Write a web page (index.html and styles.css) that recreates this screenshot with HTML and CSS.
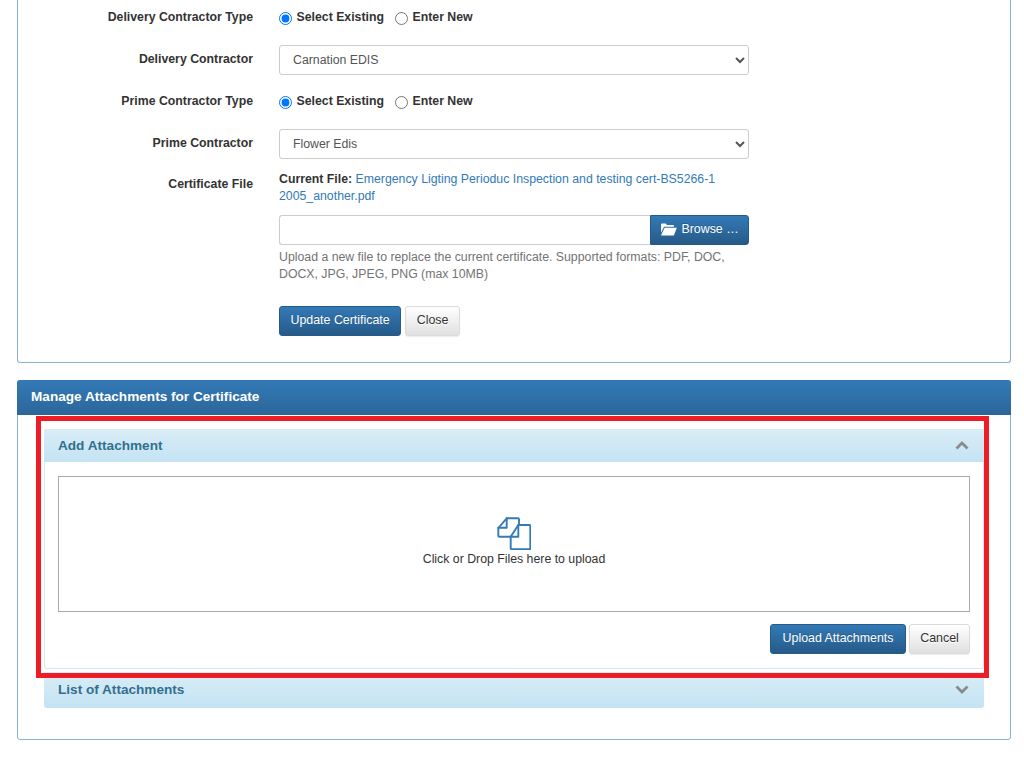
FILE: index.html
```html
<!DOCTYPE html>
<html lang="en">
<head>
<meta charset="utf-8">
<title>Manage Certificate</title>
<link rel="stylesheet" href="styles.css">
</head>
<body>
<section class="panel panel-form">
  <form class="form">
    <div class="row row-radio">
      <label class="label">Delivery Contractor Type</label>
      <div class="radios">
        <label class="radio"><input type="radio" name="d" checked> Select Existing</label>
        <label class="radio"><input type="radio" name="d"> Enter New</label>
      </div>
    </div>
    <div class="row row-select">
      <label class="label">Delivery Contractor</label>
      <select class="control"><option>Carnation EDIS</option></select>
    </div>
    <div class="row row-radio">
      <label class="label">Prime Contractor Type</label>
      <div class="radios">
        <label class="radio"><input type="radio" name="p" checked> Select Existing</label>
        <label class="radio"><input type="radio" name="p"> Enter New</label>
      </div>
    </div>
    <div class="row row-select">
      <label class="label">Prime Contractor</label>
      <select class="control"><option>Flower Edis</option></select>
    </div>
    <div class="row row-file">
      <label class="label label-file">Certificate File</label>
      <div class="file-col">
        <p class="current"><strong>Current File:</strong> <a href="#">Emergency Ligting Perioduc Inspection and testing cert-BS5266-1 2005_another.pdf</a></p>
        <div class="file-group">
          <input class="file-input" type="text">
          <button type="button" class="btn btn-primary btn-browse">
            <svg class="folder" viewBox="0 0 18 14" aria-hidden="true"><path d="M1 3V1.600C1 1 1.400.6 2 .6h4l1.200 1.600H14c.5 0 .8.3.8.8v1H4.200L1 10.500z M4.800 5H18l-3.200 8.400H.9z" fill="#fff"/></svg>
            Browse …
          </button>
        </div>
        <p class="help">Upload a new file to replace the current certificate. Supported formats: PDF, DOC, DOCX, JPG, JPEG, PNG (max 10MB)</p>
        <div class="actions">
          <button type="button" class="btn btn-primary">Update Certificate</button>
          <button type="button" class="btn btn-default">Close</button>
        </div>
      </div>
    </div>
  </form>
</section>

<section class="panel panel-attach">
  <h2 class="panel-heading">Manage Attachments for Certificate</h2>
  <div class="panel-body">
    <div class="highlight"></div>
    <div class="acc acc-open">
      <div class="acc-head">
        <span>Add Attachment</span>
        <svg class="chev" viewBox="0 0 14 9" aria-hidden="true"><path d="M1.500 7.500 7 2l5.500 5.500" fill="none" stroke="#8a8a8a" stroke-width="2.800"/></svg>
      </div>
      <div class="acc-body">
        <div class="dropzone">
          <svg class="files" viewBox="0 0 34 33" aria-hidden="true"><g fill="none" stroke="#337ab7" stroke-width="1.900" stroke-linejoin="round" stroke-linecap="round"><path d="M22 8V2.300a1 1 0 0 0-1-1H9.700L1.300 11v7.700a1 1 0 0 0 1 1h11.400"/><path d="M9.700 1.300v9.400H1.300"/><path d="M21.300 8h11a1 1 0 0 1 1 1v22.300a1 1 0 0 1-1 1H14.700a1 1 0 0 1-1-1V19.700z"/><path d="M21.300 8v11.700h-7.600"/></g></svg>
          <div class="drop-text">Click or Drop Files here to upload</div>
        </div>
        <div class="drop-actions">
          <button type="button" class="btn btn-primary btn-upload">Upload Attachments</button>
          <button type="button" class="btn btn-default btn-cancel">Cancel</button>
        </div>
      </div>
    </div>
    <div class="acc acc-closed">
      <div class="acc-head">
        <span>List of Attachments</span>
        <svg class="chev" viewBox="0 0 14 9" aria-hidden="true"><path d="M1.500 1.500 7 7l5.500-5.500" fill="none" stroke="#8a8a8a" stroke-width="2.800"/></svg>
      </div>
    </div>
  </div>
</section>
</body>
</html>
```
FILE: styles.css
```css
* { box-sizing: border-box; }
html, body { margin: 0; padding: 0; background: #fff; }
body {
  padding: 0 13px 0 17px;
  height: 759px;
  overflow: hidden;
  font-family: "Liberation Sans", Arial, sans-serif;
  font-size: 12.3px;
  line-height: 17px;
  color: #333;
}
.panel {
  border: 1px solid #8ab0d6;
  border-radius: 3px;
  background: #fff;
}
.panel-form {
  border-top: 0;
  border-radius: 0 0 3px 3px;
  height: 363px;
  margin-bottom: 17px;
}
.form { display: flex; flex-direction: column; padding-top: 9px; }
.row { display: flex; align-items: center; }
.row-radio { height: 17px; }
.row-select { height: 30px; margin-top: 19px; }
.row-select + .row-radio { margin-top: 18px; }
.row-select .label { padding-bottom: 2px; }
.row-file { align-items: flex-start; margin-top: 12px; }
.label {
  width: 235px;
  margin-right: 26px;
  text-align: right;
  font-weight: bold;
  flex: none;
}
.label-file { padding-top: 5px; }
.radios { display: flex; gap: 11px; }
.radio { display: flex; align-items: center; font-weight: bold; gap: 4.5px; }
.radio input { margin: 2px 0 0; width: 13px; height: 13px; accent-color: #0075ff; }
.control {
  width: 470px;
  height: 30px;
  border: 1px solid #ccc;
  border-radius: 3px;
  background: #fff;
  padding: 0 9px;
  font: inherit;
  color: #555;
}
.file-col { width: 470px; }
.current { margin: 0; }
.current a { color: #337ab7; text-decoration: none; }
.file-group { display: flex; height: 30px; margin-top: 10px; }
.file-input {
  flex: 1;
  min-width: 0;
  border: 1px solid #ccc;
  border-right: 0;
  border-radius: 3px 0 0 3px;
}
.btn {
  height: 30px;
  border-radius: 3px;
  font: inherit;
  font-size: 12.4px;
  padding: 0 10.5px 2px;
  cursor: pointer;
}
.btn-primary {
  border: 1px solid #265a88;
  color: #fff;
  background: linear-gradient(#337ab7, #265a88);
  text-shadow: 0 -1px 0 rgba(0,0,0,.2);
}
.btn-default {
  border: 1px solid #dbdbdb;
  color: #333;
  background: linear-gradient(#fff, #e0e0e0);
  text-shadow: 0 1px 0 #fff;
  box-shadow: 0 1px 1px rgba(0,0,0,.08);
}
.btn-browse {
  width: 99px;
  padding: 0 0 2px;
  border-radius: 0 3px 3px 0;
  display: flex;
  align-items: center;
  justify-content: center;
  gap: 4px;
}
.btn-upload { width: 136px; padding-left: 0; padding-right: 0; }
.btn-cancel { width: 61px; padding-left: 0; padding-right: 0; }
.folder { width: 17px; height: 13px; }
.help { margin: 4px 0 0; color: #737373; }
.actions { display: flex; gap: 4px; margin-top: 23px; }
.panel-attach { height: 360px; }
.panel-heading {
  margin: -1px -1px 0;
  height: 35px;
  padding: 0 14px 2px;
  display: flex;
  align-items: center;
  background: linear-gradient(#337ab7, #2b6699);
  border-radius: 3px 3px 0 0;
  color: #fff;
  font-size: 13.6px;
  font-weight: bold;
}
.panel-body { position: relative; padding: 14px 26px 0; }
.highlight {
  position: absolute;
  left: 18px;
  top: 1px;
  width: 953px;
  height: 262px;
  border: 5px solid #ee1c25;
  pointer-events: none;
  z-index: 2;
}
.acc-head {
  display: flex;
  align-items: center;
  justify-content: space-between;
  padding: 0 15px 0 14px;
  background: linear-gradient(#d9edf7, #c4e3f3);
  color: #31708f;
  font-size: 13.6px;
  font-weight: bold;
}
.acc-open { border: 1px solid #d0e9f3; border-radius: 3px; height: 240px; }
.acc-open .acc-head { height: 33px; margin: -1px -1px 0; }
.acc-body { padding: 14px 13px 0; }
.acc-closed { margin-top: 3px; }
.acc-closed .acc-head { height: 36px; border-radius: 0 0 3px 3px; align-items: flex-start; }
.acc-closed .acc-head span { line-height: 36px; }
.acc-closed .chev { margin-top: 13px; }
.chev { width: 14px; height: 9px; }
.dropzone {
  height: 136px;
  border: 1px solid #aaa;
  display: flex;
  flex-direction: column;
  align-items: center;
  padding-top: 40px;
}
.files { width: 34px; height: 33px; }
.drop-text { margin-top: 1px; line-height: 17px; }
.drop-actions { display: flex; justify-content: flex-end; gap: 3px; margin-top: 12px; }
```
